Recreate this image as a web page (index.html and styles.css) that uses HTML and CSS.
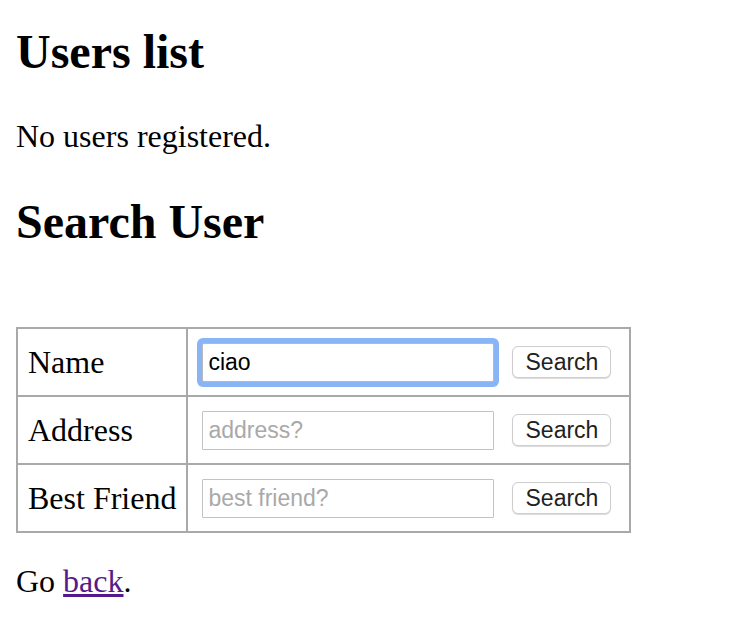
FILE: index.html
```html
<!DOCTYPE html>
<html>
<head>
<meta charset="utf-8">
<title>Users</title>
<link rel="stylesheet" href="styles.css">
</head>
<body>
<h1 class="title title-first">Users list</h1>
<p class="empty">No users registered.</p>
<h2 class="title title-second">Search User</h2>
<table class="search">
  <tr>
    <td class="label">Name</td>
    <td class="cell"><div class="field"><input class="inp focused" type="text" value="ciao" placeholder="name?"><button class="btn">Search</button></div></td>
  </tr>
  <tr>
    <td class="label">Address</td>
    <td class="cell"><div class="field"><input class="inp" type="text" placeholder="address?"><button class="btn">Search</button></div></td>
  </tr>
  <tr>
    <td class="label">Best Friend</td>
    <td class="cell"><div class="field"><input class="inp" type="text" placeholder="best friend?"><button class="btn">Search</button></div></td>
  </tr>
</table>
<p class="back">Go <a class="link" href="#">back</a>.</p>
</body>
</html>
```
FILE: styles.css
```css
html, body {
  margin: 0;
  padding: 0;
  background: #fff;
}
body {
  padding: 0 16px;
  font-family: "Liberation Serif", "Times New Roman", serif;
  font-size: 32px;
  line-height: 37px;
  color: #000;
}
.title {
  font-size: 48px;
  font-weight: bold;
  line-height: 56px;
  margin: 0;
}
.title-first {
  padding-top: 24px;
}
.empty {
  margin: 38px 0 0;
}
.title-second {
  margin-top: 39px;
}
.search {
  margin-top: 77px;
  border-collapse: collapse;
  border: 2px solid #a9a9a9;
  width: 615px;
}
.search td {
  border: 2px solid #a9a9a9;
  height: 66px;
  padding: 0;
  vertical-align: middle;
}
.search td.label {
  width: 148px;
  padding: 0 10px;
  white-space: nowrap;
}
.search td.cell {
  padding: 0 18px 0 14px;
}
.field {
  display: flex;
  align-items: center;
  gap: 18px;
}
.inp {
  box-sizing: border-box;
  width: 292px;
  height: 39px;
  margin: 0;
  border: 1px solid #c2c2c2;
  border-radius: 1px;
  padding: 0 5px;
  font-family: "Liberation Sans", Arial, sans-serif;
  font-size: 23px;
  color: #000;
  background: #fff;
  outline: none;
}
.inp::placeholder {
  color: #a9a9a9;
}
.inp.focused {
  border-color: #b9b9b9;
  border-radius: 2px;
  box-shadow: 0 0 0 5px #89b5f7;
}
.btn {
  box-sizing: border-box;
  width: 99px;
  height: 32px;
  margin: 0;
  padding: 0;
  border: 1px solid #cdcdcd;
  border-radius: 6px;
  background: #fff;
  box-shadow: 0 1px 1px rgba(0, 0, 0, 0.14);
  font-family: "Liberation Sans", Arial, sans-serif;
  font-size: 23px;
  color: #222;
}
.back {
  margin: 30px 0 0;
}
.link {
  color: #551a8b;
  text-decoration: underline;
}
```
